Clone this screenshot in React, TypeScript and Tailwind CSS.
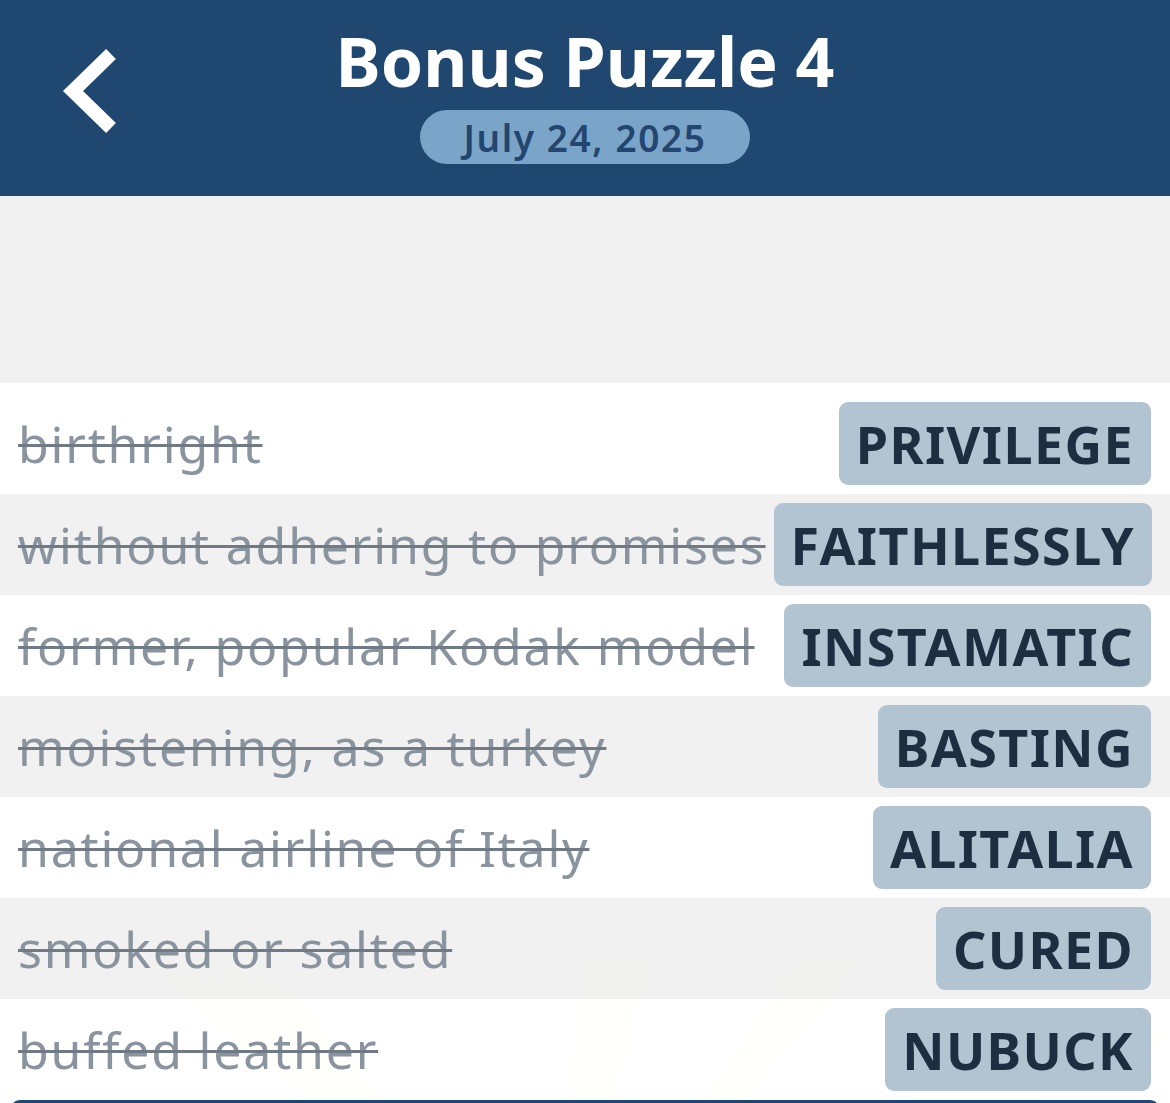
import React from "react";

const rows = [
  { clue: "birthright", answer: "PRIVILEGE" },
  { clue: "without adhering to promises", answer: "FAITHLESSLY" },
  { clue: "former, popular Kodak model", answer: "INSTAMATIC" },
  { clue: "moistening, as a turkey", answer: "BASTING" },
  { clue: "national airline of Italy", answer: "ALITALIA" },
  { clue: "smoked or salted", answer: "CURED" },
  { clue: "buffed leather", answer: "NUBUCK" },
];

const font = { fontFamily: '"Noto Sans", "Open Sans", sans-serif' };

export default function App() {
  return (
    <div className="w-[1170px] h-[1103px] overflow-hidden bg-white flex flex-col" style={font}>
      <header className="relative h-[196px] bg-[#1f4770] flex flex-col items-center shrink-0">
        <button className="absolute left-[56px] top-[44px] w-[66px] h-[94px] flex items-center justify-center">
          <svg width="66" height="94" viewBox="0 0 66 94">
            <path d="M55 10 L17 47 L55 84" fill="none" stroke="#ffffff" strokeWidth="14" strokeLinecap="butt" strokeLinejoin="miter" />
          </svg>
        </button>
        <h1 className="mt-[18px] text-[68px] leading-[86px] font-bold text-white tracking-[0px]">Bonus Puzzle 4</h1>
        <div className="mt-[6px] h-[54px] w-[330px] rounded-full bg-[#7ba4c9] flex items-center justify-center">
          <span className="text-[37px] font-semibold text-[#22466f] leading-none tracking-[1.6px]">July 24, 2025</span>
        </div>
      </header>
      <div className="h-[187px] bg-[#f0f0f0] shrink-0" />
      <div className="relative flex-1">
        <svg className="absolute inset-0 w-full h-full z-0" viewBox="0 0 1170 720" preserveAspectRatio="none">
          <g fill="#ffeeb0" opacity="0.6">
            <polygon points="560,900 130,560 260,560" />
            <polygon points="560,900 580,560 650,560" />
            <polygon points="560,900 800,560 870,560" />
            <polygon points="560,900 1080,600 1170,640" />
          </g>
        </svg>
        <div className="relative z-10 pt-[10px] bg-white/80">
          {rows.map((r, i) => (
            <div
              key={r.answer}
              className={`h-[101px] flex items-start justify-between gap-[8px] pl-[18px] pr-[19px] pt-[9px] ${i % 2 === 1 ? "bg-[#f0f0f0]/90" : "bg-white/70"}`}
            >
              <span className="mt-[12px] text-[50px] leading-[60px] text-[#8a949e] line-through decoration-[#6f7a85] decoration-[3px] whitespace-nowrap tracking-[1.8px]">
                {r.clue}
              </span>
              <span className="shrink-0 h-[83px] px-[17px] rounded-[9px] bg-[#b2c4d1] flex items-center text-[52px] font-bold text-[#1c2e40] leading-none whitespace-nowrap tracking-[1.4px]">
                {r.answer}
              </span>
            </div>
          ))}
          <div className="mx-[10px] h-[20px] rounded-t-[10px] bg-[#1f4770]" />
        </div>
      </div>
    </div>
  );
}
